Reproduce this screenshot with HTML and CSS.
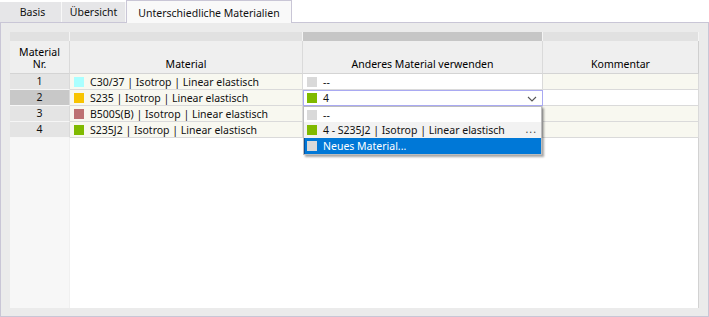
FILE: index.html
```html
<!DOCTYPE html>
<html>
<head>
  <title>Unterschiedliche Materialien</title>
  <meta name="viewport" content="width=device-width, initial-scale=1">
  <link rel="stylesheet" href="styles.css">
</head>
<body>
<div class="tabs">
  <div class="tab basis">Basis</div>
  <div class="tab overview">Übersicht</div>
  <div class="tab active">Unterschiedliche Materialien</div>
</div>

<div class="panel">
  <div class="grid">
    <div class="band"></div>
    <div class="band"></div>
    <div class="band dark"></div>
    <div class="band"></div>

    <div class="head nr">Material<br>Nr.</div>
    <div class="head">Material</div>
    <div class="head">Anderes Material verwenden</div>
    <div class="head">Kommentar</div>

    <div class="num">1</div>
    <div class="cell"><span class="sw cyan"></span>C30/37 | Isotrop | Linear elastisch</div>
    <div class="cell white"><span class="sw grey"></span>--</div>
    <div class="cell"></div>

    <div class="num sel">2</div>
    <div class="cell"><span class="sw gold"></span>S235 | Isotrop | Linear elastisch</div>
    <div class="cell white combo"><span class="sw green"></span>4
      <svg class="chev" width="10" height="6" viewBox="0 0 10 6"><path d="M1 1 L5 5 L9 1" fill="none" stroke="#555" stroke-width="1.1"/></svg>
    </div>
    <div class="cell white"></div>

    <div class="num">3</div>
    <div class="cell"><span class="sw rose"></span>B500S(B) | Isotrop | Linear elastisch</div>
    <div class="cell"></div>
    <div class="cell"></div>

    <div class="num">4</div>
    <div class="cell"><span class="sw green"></span>S235J2 | Isotrop | Linear elastisch</div>
    <div class="cell"></div>
    <div class="cell"></div>

    <div class="fill-nr"></div>
    <div class="fill"></div>

    <div class="dropdown">
      <div class="item"><span class="sw grey"></span>--</div>
      <div class="item hover"><span class="sw green"></span>4 - S235J2 | Isotrop | Linear elastisch<span class="dots">...</span></div>
      <div class="item chosen"><span class="sw grey"></span>Neues Material...</div>
    </div>
  </div>
</div>
</body>
</html>
```

FILE: styles.css
```css
body { margin: 0; background: #fff; font-family: 'Segoe UI', 'Noto Sans', sans-serif; font-size: 10.5px; color: #111; }
.tabs { display: flex; align-items: flex-end; height: 22px; }
.tab { height: 20px; line-height: 20px; background: #e6e6e8; border-right: 1px solid #f8f8f8; box-sizing: border-box; text-align: center; }
.tab.basis { width: 62px; padding-left: 4px; }
.tab.overview { width: 64px; }
.tab.active { width: 166px; height: 23px; line-height: 24px; background: #f9f9f9; border: 1px solid #c9c6d6; border-bottom: none; margin-bottom: -1px; position: relative; z-index: 1; }

.panel { height: 295px; box-sizing: border-box; border: 1px solid #c9c6d6; background: #ebebeb; padding: 9px 9px 8px 9px; }

.grid { position: relative; display: grid; height: 100%; grid-template-columns: 60px 233px 240px 156px; grid-template-rows: 9px 33px repeat(4, 16px) 1fr; background: #fff; }
.grid > div { box-sizing: border-box; }
.band { background: #e1e1e1; border-right: 1px solid #f4f4f4; }
.band.dark { background: #c6c6c6; }
.head { background: #efefef; border-right: 1px solid #dadada; border-bottom: 1px solid #d4d4d4; display: flex; align-items: flex-end; justify-content: center; text-align: center; line-height: 15px; padding-bottom: 1px; color: #000; }
.head:nth-child(8) { border-right-color: #cfcfcf; }
.head.nr { line-height: 12px; padding-bottom: 3px; }

.num { background: #e4e4e4; border-bottom: 1px solid #f6f6f6; border-right: 1px solid #dadada; text-align: center; line-height: 15px; }
.num.sel { background: #c8c8c8; }
.cell { background: #f8f8f0; border-right: 1px solid #dadada; border-bottom: 1px solid #dadada; display: flex; align-items: center; padding-left: 4px; white-space: nowrap; }
.cell.white { background: #fff; }
.cell.combo { border: 1px solid #a9a9f2; position: relative; padding-left: 3px; }
.chev { position: absolute; right: 5px; top: 5px; }

.sw { display: inline-block; width: 10px; height: 10px; margin-right: 6px; flex: none; }
.cyan { background: #aaffff; }
.gold { background: #f8c400; }
.rose { background: #bd7272; }
.green { background: #80ba00; }
.grey { background: #d9d9d9; }

.fill-nr { background: #f7f7f7; border-right: 1px solid #f0f0f0; }
.fill { grid-column: 2 / 5; background: #fff; border-right: 1px solid #d2d2d2; }

.dropdown { position: absolute; left: 293px; top: 74px; width: 239px; background: #fff; border: 1px solid #bdbdbd; box-shadow: 2px 2px 2px rgba(0, 0, 0, 0.35); }
.item { height: 15px; display: flex; align-items: center; padding-left: 3px; position: relative; white-space: nowrap; }
.item.hover { background: #f2f2f2; height: 16px; }
.item.chosen { background: #0078d7; color: #fff; border-left: 1px solid #0a4f9a; padding-left: 2px; height: 16px; }
.dots { position: absolute; right: 4px; top: 0; color: #444; letter-spacing: 1px; }
```
